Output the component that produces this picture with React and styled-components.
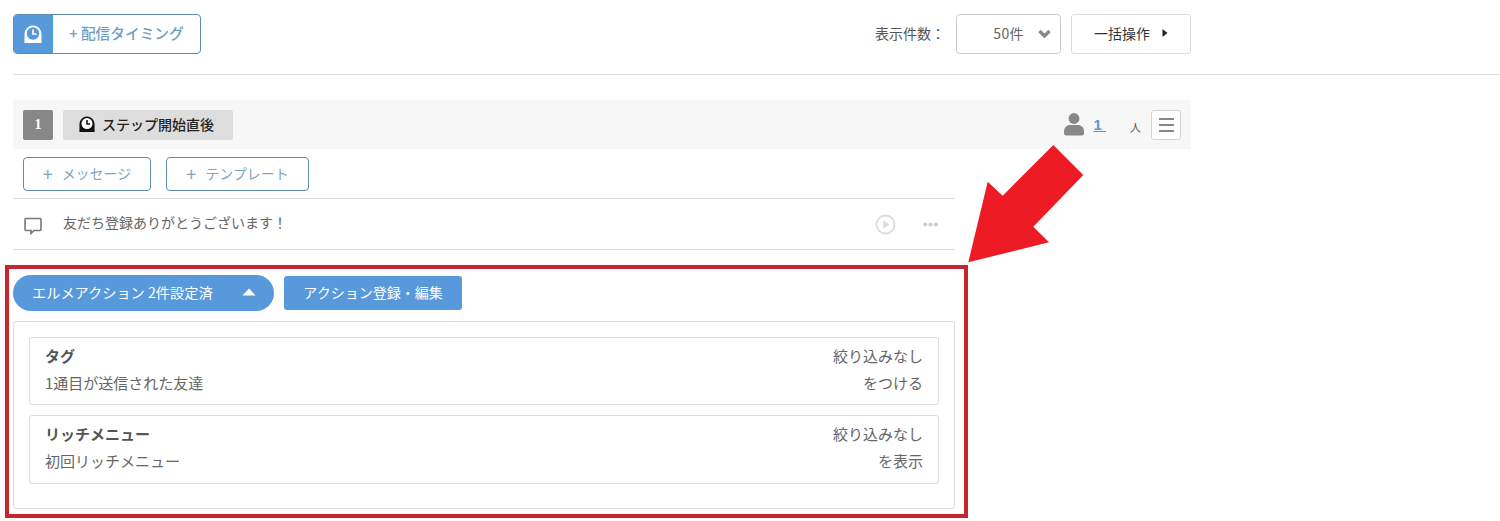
import React from 'react';
import styled, { createGlobalStyle } from 'styled-components';

const GlobalStyle = createGlobalStyle`
  html, body {
    margin: 0;
    padding: 0;
    background: #fff;
    overflow: hidden;
  }
  body {
    font-family: 'Noto Sans CJK JP', 'Noto Sans', sans-serif;
    font-size: 14px;
    color: #555;
  }
  * { box-sizing: border-box; }
`;

const Page = styled.div`
  position: relative;
  width: 1500px;
  height: 521px;
  padding-top: 14px;
`;

const TopBar = styled.div`
  display: flex;
  align-items: center;
  justify-content: space-between;
  width: 1178px;
  height: 40px;
  margin-left: 13px;
`;

const TimingButton = styled.div`
  display: flex;
  width: 188px;
  height: 40px;
  border: 1px solid #5b8db0;
  border-radius: 4px;
  overflow: hidden;
`;

const TimingIcon = styled.div`
  display: flex;
  align-items: center;
  justify-content: center;
  width: 40px;
  margin: -1px 0 -1px -1px;
  background: #5899dc;
`;

const TimingLabel = styled.div`
  flex: 1;
  display: flex;
  align-items: center;
  justify-content: center;
  padding-bottom: 4px;
  color: #6d9fc6;
  font-size: 14.7px;
  font-weight: 500;
`;

const TopRight = styled.div`
  display: flex;
  align-items: center;
`;

const CountLabel = styled.span`
  margin-right: 11px;
  padding-bottom: 2px;
  font-size: 14px;
  color: #555;
`;

const CountSelect = styled.div`
  display: flex;
  align-items: center;
  justify-content: flex-end;
  width: 105px;
  height: 40px;
  margin-right: 10px;
  padding: 0 9px 2px 0;
  gap: 14px;
  border: 1px solid #ccc;
  border-radius: 4px;
  font-size: 14px;
  letter-spacing: 0.4px;
  color: #666;
`;

const BulkButton = styled.div`
  display: flex;
  align-items: center;
  justify-content: center;
  gap: 12px;
  width: 120px;
  height: 40px;
  padding-bottom: 2px;
  border: 1px solid #ddd;
  border-radius: 3px;
  font-size: 14px;
  color: #333;
`;

const Divider = styled.hr`
  margin: 20px 0 25px 13px;
  height: 1px;
  border: 0;
  background: #ddd;
`;

const StepHeader = styled.div`
  display: flex;
  align-items: center;
  width: 1178px;
  height: 49px;
  margin-left: 13px;
  padding: 0 10px;
  background: #f7f7f7;
`;

const StepNumber = styled.div`
  display: flex;
  align-items: center;
  justify-content: center;
  width: 30px;
  height: 30px;
  margin-right: 10px;
  border-radius: 2px;
  background: #888;
  color: #fff;
  font-family: 'Liberation Serif', serif;
  font-size: 14px;
  font-weight: 700;
`;

const StepName = styled.div`
  display: flex;
  align-items: center;
  gap: 7px;
  width: 170px;
  height: 30px;
  padding: 0 0 2px 16px;
  border-radius: 2px;
  background: #ddd;
  color: #222;
  font-size: 14px;
  font-weight: 500;
`;

const StepStats = styled.div`
  display: flex;
  align-items: center;
  margin-left: auto;
`;

const FriendCount = styled.a`
  margin: 0 24px 0 9px;
  padding-bottom: 1px;
  color: #5899dc;
  font-family: 'Liberation Sans', sans-serif;
  font-size: 15px;
  font-weight: 700;
  text-decoration: underline;
  white-space: pre;
`;

const PersonUnit = styled.span`
  margin-right: 10px;
  padding-top: 5px;
  font-size: 11px;
  color: #555;
`;

const MenuButton = styled.div`
  display: flex;
  flex-direction: column;
  align-items: center;
  justify-content: center;
  gap: 4px;
  width: 30px;
  height: 30px;
  border: 1px solid #d4d4d4;
  border-radius: 3px;
  background: #fff;
`;

const MenuBar = styled.span`
  width: 15px;
  height: 2px;
  background: #888;
`;

const AddRow = styled.div`
  display: flex;
  gap: 15px;
  margin: 8px 0 7px 23px;
`;

const AddButton = styled.div`
  display: flex;
  align-items: center;
  justify-content: center;
  gap: 9px;
  width: ${(p) => p.$width}px;
  height: 34px;
  padding-bottom: 3px;
  border: 1px solid #5b8db0;
  border-radius: 4px;
  color: #7fa5c3;
  font-size: 14px;
`;

const PlusMark = styled.span`
  font-size: 18px;
  line-height: 18px;
`;

const MessageRow = styled.div`
  display: flex;
  align-items: center;
  width: 942px;
  height: 52px;
  margin-left: 13px;
  padding: 0 17px 0 11px;
  border-top: 1px solid #ddd;
  border-bottom: 1px solid #ddd;
`;

const MessageText = styled.span`
  margin-left: 21px;
  margin-bottom: 5px;
  font-size: 14px;
  color: #666;
`;

const MessageTools = styled.div`
  display: flex;
  align-items: center;
  gap: 27px;
  margin-left: auto;
`;

const ActionBar = styled.div`
  display: flex;
  align-items: center;
  gap: 10px;
  margin: 25px 0 10px 13px;
`;

const ActionToggle = styled.div`
  display: flex;
  align-items: center;
  justify-content: space-between;
  width: 261px;
  height: 36px;
  padding: 0 18px 2px 19px;
  border-radius: 18px;
  background: #5899dc;
  color: #fff;
  font-size: 14.2px;
`;

const ActionEdit = styled.div`
  display: flex;
  align-items: center;
  justify-content: center;
  width: 178px;
  height: 34px;
  padding-bottom: 2px;
  border-radius: 3px;
  background: #5899dc;
  color: #fff;
  font-size: 14px;
`;

const ActionPanel = styled.div`
  display: flex;
  flex-direction: column;
  gap: 10px;
  width: 942px;
  height: 188px;
  margin-left: 13px;
  padding: 15px;
  border: 1px solid #ddd;
  border-radius: 3px;
`;

const ActionCard = styled.div`
  display: grid;
  grid-template-columns: 1fr auto;
  align-content: center;
  row-gap: 6px;
  height: ${(p) => p.$height}px;
  padding: 0 15px 5px;
  border: 1px solid #ddd;
  border-radius: 3px;
`;

const CardTitle = styled.div`
  line-height: 21px;
  font-size: 15px;
  font-weight: 700;
  color: #555;
`;

const CardText = styled.div`
  line-height: 21px;
  font-size: 15px;
  color: #666;
  text-align: ${(p) => (p.$right ? 'right' : 'left')};
`;

const RedFrame = styled.div`
  position: absolute;
  left: 5px;
  top: 265px;
  width: 963px;
  height: 253px;
  border: 4px solid #c8262f;
  pointer-events: none;
`;

const RedArrow = styled.svg`
  position: absolute;
  left: 960px;
  top: 140px;
`;

const ClockIcon = ({ body, face, size }) => (
  <svg width={size} height={size} viewBox="0 0 18 18">
    <path d="M0.5 18 V9 a8.5 8.5 0 0 1 17 0 V18 Z" fill={body} />
    <circle cx="9" cy="8.5" r="6.2" fill={face} />
    <path d="M9 4.5 V9 H12.5" fill="none" stroke={body} strokeWidth="1.7" />
  </svg>
);

const PersonIcon = () => (
  <svg width="20" height="23" viewBox="0 0 20 23">
    <circle cx="10" cy="5.5" r="5.4" fill="#888" />
    <path d="M0 19 C0 14 3 12 6 12 H14 C17 12 20 14 20 19 V20 Q20 22.5 17.5 22.5 H2.5 Q0 22.5 0 20 Z" fill="#888" />
  </svg>
);

const ChevronIcon = () => (
  <svg width="13" height="9" viewBox="0 0 13 9">
    <path d="M1.5 2 L6.5 7 L11.5 2" fill="none" stroke="#888" strokeWidth="3.4" />
  </svg>
);

const CaretRight = () => (
  <svg width="6" height="8" viewBox="0 0 6 8">
    <path d="M0.5 0 L5.5 4 L0.5 8 Z" fill="#222" />
  </svg>
);

const CaretUp = () => (
  <svg width="14" height="8" viewBox="0 0 14 8">
    <path d="M7 0.5 L13.6 7.5 H0.4 Z" fill="#fff" />
  </svg>
);

const CommentIcon = () => (
  <svg width="18" height="18" viewBox="0 0 18 18" style={{ marginTop: 3 }}>
    <path d="M2 1.5 H16 Q17 1.5 17 2.5 V12.5 Q17 13.5 16 13.5 H10 L7 16.5 V13.5 H2 Q1 13.5 1 12.5 V2.5 Q1 1.5 2 1.5 Z" fill="none" stroke="#777" strokeWidth="1.6" />
  </svg>
);

const PlayIcon = () => (
  <svg width="21" height="21" viewBox="0 0 22 22">
    <circle cx="11" cy="11" r="9.5" fill="none" stroke="#ddd" strokeWidth="2" />
    <path d="M8.5 6.5 L15 11 L8.5 15.5 Z" fill="#ddd" />
  </svg>
);

const DotsIcon = () => (
  <svg width="15" height="5" viewBox="0 0 15 5">
    <circle cx="2.2" cy="2.5" r="2" fill="#ccc" />
    <circle cx="7.5" cy="2.5" r="2" fill="#ccc" />
    <circle cx="12.8" cy="2.5" r="2" fill="#ccc" />
  </svg>
);

const actions = [
  { title: 'タグ', filter: '絞り込みなし', target: '1通目が送信された友達', verb: 'をつける', height: 68 },
  { title: 'リッチメニュー', filter: '絞り込みなし', target: '初回リッチメニュー', verb: 'を表示', height: 69 },
];

const App = () => (
  <Page>
    <GlobalStyle />
    <TopBar>
      <TimingButton>
        <TimingIcon>
          <ClockIcon body="#fff" face="#5899dc" size={18} />
        </TimingIcon>
        <TimingLabel>+ 配信タイミング</TimingLabel>
      </TimingButton>
      <TopRight>
        <CountLabel>表示件数：</CountLabel>
        <CountSelect>
          50件
          <ChevronIcon />
        </CountSelect>
        <BulkButton>
          一括操作
          <CaretRight />
        </BulkButton>
      </TopRight>
    </TopBar>
    <Divider />
    <StepHeader>
      <StepNumber>1</StepNumber>
      <StepName>
        <ClockIcon body="#111" face="#fff" size={16} />
        ステップ開始直後
      </StepName>
      <StepStats>
        <PersonIcon />
        <FriendCount>1 </FriendCount>
        <PersonUnit>人</PersonUnit>
        <MenuButton>
          <MenuBar />
          <MenuBar />
          <MenuBar />
        </MenuButton>
      </StepStats>
    </StepHeader>
    <AddRow>
      <AddButton $width={128}>
        <PlusMark>+</PlusMark>
        メッセージ
      </AddButton>
      <AddButton $width={143}>
        <PlusMark>+</PlusMark>
        テンプレート
      </AddButton>
    </AddRow>
    <MessageRow>
      <CommentIcon />
      <MessageText>友だち登録ありがとうございます！</MessageText>
      <MessageTools>
        <PlayIcon />
        <DotsIcon />
      </MessageTools>
    </MessageRow>
    <ActionBar>
      <ActionToggle>
        エルメアクション 2件設定済
        <CaretUp />
      </ActionToggle>
      <ActionEdit>アクション登録・編集</ActionEdit>
    </ActionBar>
    <ActionPanel>
      {actions.map((a) => (
        <ActionCard key={a.title} $height={a.height}>
          <CardTitle>{a.title}</CardTitle>
          <CardText $right>{a.filter}</CardText>
          <CardText>{a.target}</CardText>
          <CardText $right>{a.verb}</CardText>
        </ActionCard>
      ))}
    </ActionPanel>
    <RedFrame />
    <RedArrow width="130" height="130" viewBox="0 0 130 130">
      <polygon
        points="8.3,122.3 27.7,41.7 42.7,55.7 93.3,5 123.3,35 73.3,86.7 89,102.3"
        fill="#ed1c24"
      />
    </RedArrow>
  </Page>
);

export default App;
